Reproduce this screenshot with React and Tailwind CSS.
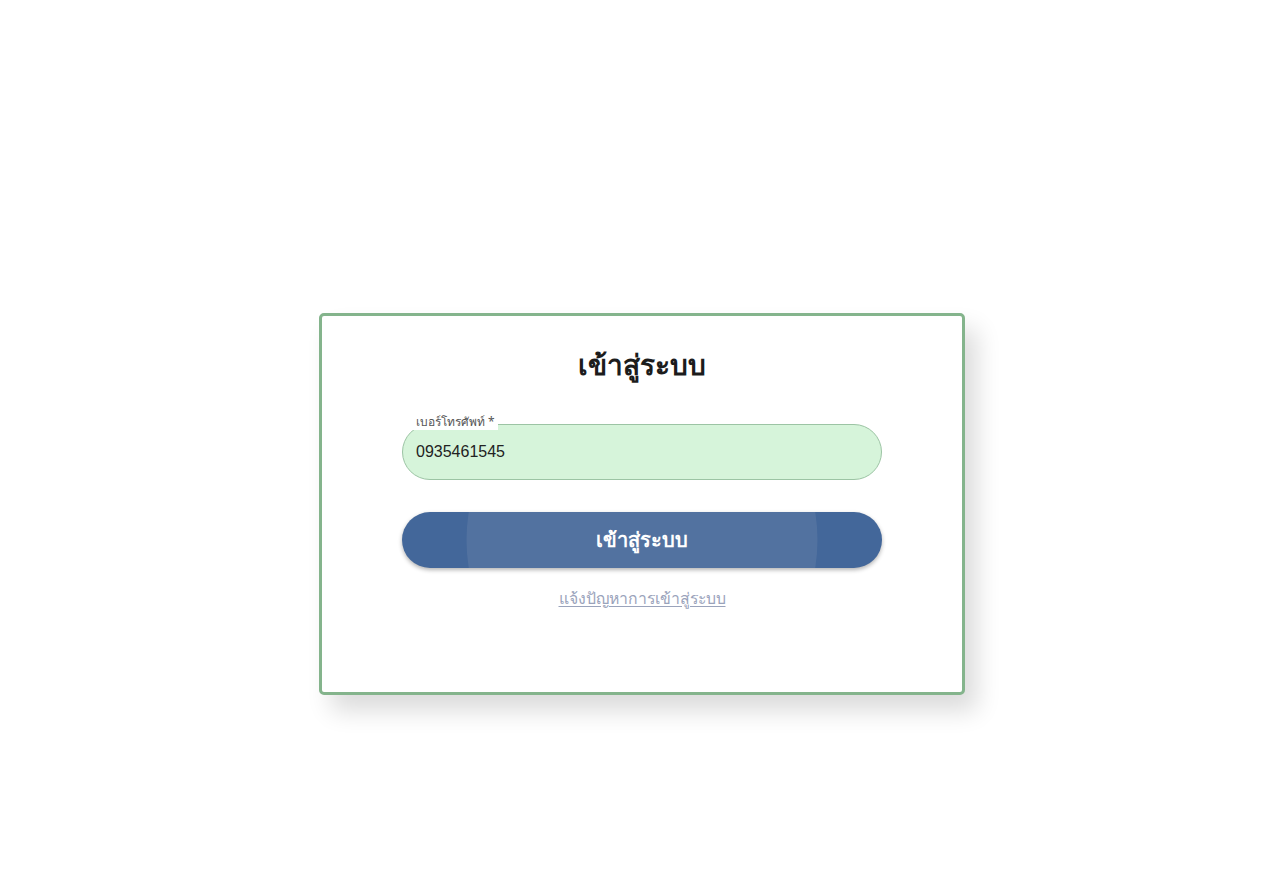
export default function App() {
  return (
    <div className="min-h-[893px] w-full bg-white flex justify-center pt-[313px]" style={{ fontFamily: '"Noto Sans", "Liberation Sans", sans-serif' }}>
      <div className="w-[646px] h-[382px] border-[3px] border-[#84b48c] rounded-[5px] bg-white shadow-[12px_16px_24px_rgba(0,0,0,0.14)] flex flex-col items-center pt-[28px]">
        {/* Title */}
        <h1 className="text-[28px] leading-[40px] font-bold text-[#1c1c1c]">เข้าสู่ระบบ</h1>

        {/* Phone field */}
        <div className="relative mt-[40px] w-[480px]">
          <span className="absolute -top-[10px] left-[11px] px-[3px] bg-white text-[12px] leading-[16px] text-[#555]">
            เบอร์โทรศัพท์ *
          </span>
          <input
            defaultValue="0935461545"
            className="w-full h-[56px] rounded-full bg-[#d6f4da] border border-[#9cc4a4] pl-[13px] text-[16px] text-[#222] outline-none"
            style={{ fontFamily: '"Liberation Sans", sans-serif' }}
          />
        </div>

        {/* Submit */}
        <button className="relative overflow-hidden mt-[32px] w-[480px] h-[56px] rounded-full bg-[#43679a] shadow-[0_2px_4px_rgba(0,0,0,0.3)] flex items-center justify-center">
          <span className="absolute left-1/2 top-1/2 -translate-x-1/2 -translate-y-1/2 w-[351px] h-[351px] rounded-full bg-[#5272a0]" />
          <span className="relative text-white text-[20px] font-semibold">เข้าสู่ระบบ</span>
        </button>

        {/* Help link */}
        <a href="#" className="mt-[18px] text-[15.8px] leading-[24px] text-[#9aa3bb] underline underline-offset-2">
          แจ้งปัญหาการเข้าสู่ระบบ
        </a>
      </div>
    </div>
  )
}
